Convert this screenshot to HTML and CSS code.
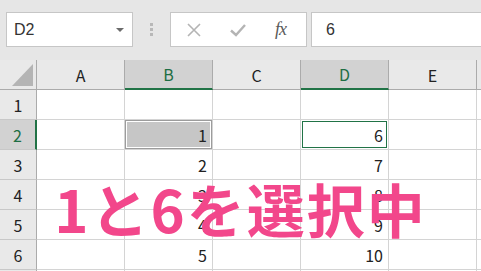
FILE: index.html
```html
<!DOCTYPE html>
<html lang="ja">
<head>
<meta charset="utf-8">
<link rel="stylesheet" href="styles.css">
</head>
<body>
<div class="app">
  <div class="toolbar">
    <div class="namebox">
      <span class="name">D2</span>
      <span class="caret"></span>
    </div>
    <div class="dots"><i></i><i></i><i></i></div>
    <div class="buttons">
      <svg class="btn" width="18" height="18" viewBox="0 0 18 18"><path d="M3 3 L15 15 M15 3 L3 15" stroke="#b4b4b4" stroke-width="1.6" fill="none"/></svg>
      <svg class="btn" width="18" height="18" viewBox="0 0 18 18"><path d="M2 9.5 L7 14 L16 4" stroke="#b4b4b4" stroke-width="2.4" fill="none"/></svg>
      <span class="fx">fx</span>
    </div>
    <div class="formula">6</div>
  </div>
  <div class="sheet">
    <div class="grid">
      <div class="corner"><span class="tri"></span></div>
      <div class="ch">A</div>
      <div class="ch sel">B</div>
      <div class="ch">C</div>
      <div class="ch sel">D</div>
      <div class="ch">E</div>
      <div class="ch"></div>

      <div class="rh">1</div><div class="c"></div><div class="c"></div><div class="c"></div><div class="c"></div><div class="c"></div><div class="c"></div>
      <div class="rh sel">2</div><div class="c"></div><div class="c multi">1</div><div class="c"></div><div class="c active">6</div><div class="c"></div><div class="c"></div>
      <div class="rh">3</div><div class="c"></div><div class="c">2</div><div class="c"></div><div class="c">7</div><div class="c"></div><div class="c"></div>
      <div class="rh">4</div><div class="c"></div><div class="c">3</div><div class="c"></div><div class="c">8</div><div class="c"></div><div class="c"></div>
      <div class="rh">5</div><div class="c"></div><div class="c">4</div><div class="c"></div><div class="c">9</div><div class="c"></div><div class="c"></div>
      <div class="rh">6</div><div class="c"></div><div class="c">5</div><div class="c"></div><div class="c">10</div><div class="c"></div><div class="c"></div>
      <div class="rh"></div><div class="c"></div><div class="c"></div><div class="c"></div><div class="c"></div><div class="c"></div><div class="c"></div>
    </div>
    <div class="caption">1と6を選択中</div>
  </div>
</div>
</body>
</html>
```
FILE: styles.css
```css
html, body {
  margin: 0;
  padding: 0;
}
body {
  width: 481px;
  height: 271px;
  overflow: hidden;
  background: #fff;
  font-family: "Noto Sans CJK JP", "Liberation Sans", sans-serif;
}
.app {
  width: 481px;
  height: 271px;
  overflow: hidden;
}
.toolbar {
  height: 60px;
  background: #e6e6e6;
  box-sizing: border-box;
  padding: 12px 0 0 6px;
  display: flex;
  align-items: flex-start;
}
.namebox {
  width: 127px;
  height: 35px;
  box-sizing: border-box;
  background: #fff;
  border: 1px solid #c6c6c6;
  display: flex;
  align-items: center;
  padding-left: 7px;
  padding-right: 8px;
}
.name {
  flex: 1;
  font-family: "Liberation Sans", sans-serif;
  font-size: 16px;
  color: #333;
}
.caret {
  width: 0;
  height: 0;
  border-left: 4px solid transparent;
  border-right: 4px solid transparent;
  border-top: 4px solid #6b6b6b;
}
.dots {
  width: 37px;
  height: 35px;
  display: flex;
  flex-direction: column;
  align-items: center;
  justify-content: center;
  gap: 2px;
}
.dots i {
  display: block;
  width: 3px;
  height: 3px;
  background: #b8b8b8;
}
.buttons {
  width: 137px;
  height: 35px;
  box-sizing: border-box;
  background: #fff;
  border: 1px solid #c6c6c6;
  display: flex;
  align-items: center;
  padding-left: 14px;
}
.btn {
  margin-right: 26px;
}
.fx {
  font-family: "Liberation Serif", serif;
  font-style: italic;
  font-size: 18px;
  color: #5a5a5a;
  margin-left: 2px;
  letter-spacing: -1px;
}
.formula {
  margin-left: 4px;
  flex: 1;
  height: 35px;
  box-sizing: border-box;
  background: #fff;
  border: 1px solid #c6c6c6;
  border-right: none;
  padding-left: 14px;
  display: flex;
  align-items: center;
  font-family: "Liberation Sans", sans-serif;
  font-size: 16px;
  color: #333;
}
.sheet {
  position: relative;
}
.grid {
  display: grid;
  grid-template-columns: 37px repeat(5, 88px) 1fr;
  grid-template-rows: repeat(8, 30px);
  font-size: 16px;
  color: #222;
}
.grid > div {
  box-sizing: border-box;
  border-right: 1px solid #d4d4d4;
  border-bottom: 1px solid #d4d4d4;
  display: flex;
  align-items: center;
}
.grid > .corner {
  background: #e9e9e9;
  border-right: 1px solid #ababab;
  border-bottom: 1px solid #ababab;
  justify-content: flex-end;
  align-items: flex-end;
  padding: 0 3px 3px 0;
}
.tri {
  width: 0;
  height: 0;
  border-left: 21px solid transparent;
  border-bottom: 22px solid #b4b4b4;
}
.grid > .ch {
  background: #e9e9e9;
  justify-content: center;
  border-right: 1px solid #ababab;
  border-bottom: 1px solid #ababab;
  color: #222;
}
.grid > .ch.sel {
  background: #d2d2d2;
  color: #1e6e44;
  border-bottom: 2px solid #217346;
}
.grid > .rh {
  background: #e9e9e9;
  justify-content: center;
  border-right: 1px solid #ababab;
  border-bottom: 1px solid #c8c8c8;
  color: #222;
}
.grid > .rh.sel {
  background: #d2d2d2;
  color: #1e6e44;
  border-right: 2px solid #217346;
}
.grid > .c {
  justify-content: flex-end;
  padding-right: 5px;
}
.grid > .multi {
  background: #c6c6c6;
  box-shadow: inset 0 0 0 1px #9c9c9c, inset 0 0 0 2px #fff;
}
.grid > .active {
  box-shadow: inset 0 0 0 1px #fff, inset 0 0 0 2px #217346;
}
.caption {
  position: absolute;
  left: 0;
  right: 0;
  top: 118px;
  text-align: center;
  font-family: "Noto Sans CJK JP", sans-serif;
  font-weight: 700;
  font-size: 58px;
  line-height: 60px;
  color: #f2478b;
  letter-spacing: 2px;
}
```
